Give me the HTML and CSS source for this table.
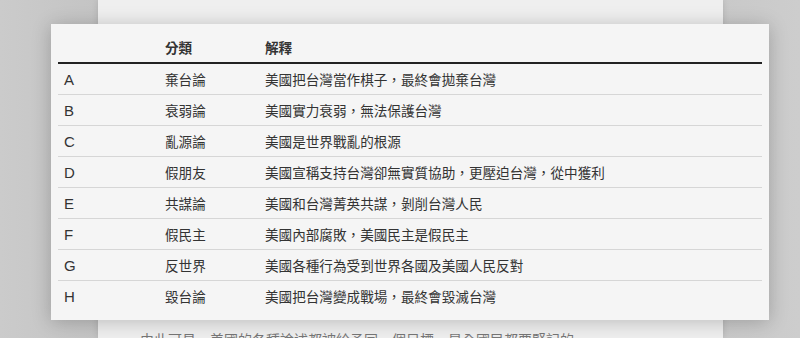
FILE: index.html
```html
<!DOCTYPE html>
<html>
	<head>
		<meta charset="utf-8">
		<title>分類表</title>
		<meta name="viewport" content="width=device-width, initial-scale=1" />
		<link rel="stylesheet" href="styles.css">
	</head>
	<body>
		<div class="page">
			<p class="page-text">由此可見，美國的各種論述都被給予同一個目標，是全國民都要緊記的</p>
		</div>
		<div class="modal">
			<table class="table">
				<thead>
					<tr>
						<th class="col-key"></th>
						<th class="col-type">分類</th>
						<th>解釋</th>
					</tr>
				</thead>
				<tbody>
					<tr><td class="key">A</td><td>棄台論</td><td>美國把台灣當作棋子，最終會拋棄台灣</td></tr>
					<tr><td class="key">B</td><td>衰弱論</td><td>美國實力衰弱，無法保護台灣</td></tr>
					<tr><td class="key">C</td><td>亂源論</td><td>美國是世界戰亂的根源</td></tr>
					<tr><td class="key">D</td><td>假朋友</td><td>美國宣稱支持台灣卻無實質協助，更壓迫台灣，從中獲利</td></tr>
					<tr><td class="key">E</td><td>共謀論</td><td>美國和台灣菁英共謀，剝削台灣人民</td></tr>
					<tr><td class="key">F</td><td>假民主</td><td>美國內部腐敗，美國民主是假民主</td></tr>
					<tr><td class="key">G</td><td>反世界</td><td>美國各種行為受到世界各國及美國人民反對</td></tr>
					<tr><td class="key">H</td><td>毀台論</td><td>美國把台灣變成戰場，最終會毀滅台灣</td></tr>
				</tbody>
			</table>
		</div>
	</body>
</html>
```

FILE: styles.css
```css
html, body { height: 100%; }
body {
	margin: 0;
	overflow: hidden;
	background: linear-gradient(to right, #cbcbcb, #c4c4c4 12%, #c8c8c8 88%, #cdcdcd);
	font-family: "Liberation Sans", "Noto Sans CJK TC", sans-serif;
	color: #333;
}
.page {
	margin-left: 98px;
	width: 625px;
	height: 100%;
	background: #efefef;
	box-shadow: 0 0 6px rgba(0, 0, 0, 0.12);
	box-sizing: border-box;
	padding: 330px 0 0 42px;
}
.page-text {
	margin: 0;
	font-size: 14px;
	line-height: 20px;
	color: #777;
}
/* overlay card with the table */
.modal {
	position: absolute;
	left: 51px;
	top: 24px;
	width: 718px;
	height: 296px;
	box-sizing: border-box;
	padding: 8px 7px 0 7px;
	background: #f5f5f5;
	box-shadow: 0 2px 18px rgba(0, 0, 0, 0.22);
}
.table {
	width: 100%;
	border-collapse: collapse;
	font-size: 13.6px;
}
.table th, .table td {
	text-align: left;
	padding: 0 6px;
	white-space: nowrap;
}
.table th {
	height: 30px;
	font-weight: bold;
	border-bottom: 2px solid #222;
}
.table td {
	height: 30px;
	border-bottom: 1px solid #d6d6d6;
}
.table td.key { font-size: 15px; }
.table tbody tr:last-child td { border-bottom: none; }
.col-key { width: 89px; }
.col-type { width: 88px; }
```
